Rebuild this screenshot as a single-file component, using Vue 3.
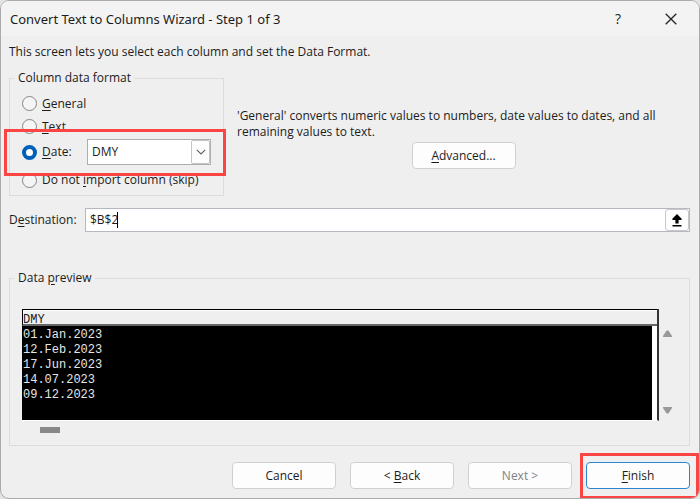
<template>
    <div class="dialog" role="dialog" aria-labelledby="dialog-title">
        <header class="title-bar">
            <h1 id="dialog-title">Convert Text to Columns Wizard - Step 1 of 3</h1>
            <button type="button" class="title-button help" aria-label="Help">?</button>
            <button type="button" class="title-button" aria-label="Close">
                <svg width="12" height="12" viewBox="0 0 12 12" fill="none" stroke="#222" stroke-width="1.3">
                    <path d="M0.7 0.7 11.3 11.3M11.3 0.7 0.7 11.3" />
                </svg>
            </button>
        </header>

        <main class="content">
            <p class="intro">This screen lets you select each column and set the Data Format.</p>

            <div class="format-row">
                <fieldset class="group format-group">
                    <legend>Column data format</legend>
                    <div v-for="option in formats" :key="option.id" :class="['format-option', { tall: option.tall }]">
                        <input :id="option.id" v-model="format" type="radio" name="format" :value="option.id">
                        <label :for="option.id" :class="{ 'date-label': option.id === 'date' }">{{ option.before }}<u>{{ option.key }}</u>{{ option.after }}</label>
                        <div v-if="option.id === 'date'" class="select-box">
                            <select v-model="dateOrder" aria-label="Date order">
                                <option v-for="order in dateOrders" :key="order">{{ order }}</option>
                            </select>
                            <span class="select-arrow">
                                <svg width="10" height="6" viewBox="0 0 10 6" fill="none" stroke="#666" stroke-width="1.2">
                                    <path d="M0.8 0.8 5 5 9.2 0.8" />
                                </svg>
                            </span>
                        </div>
                    </div>
                    <span class="highlight highlight-date"></span>
                </fieldset>

                <div class="format-help">
                    <p>'General' converts numeric values to numbers, date values to dates, and all remaining values to text.</p>
                    <button type="button" class="button"><span><u>A</u>dvanced...</span></button>
                </div>
            </div>

            <div class="destination">
                <label for="destination">D<u>e</u>stination:</label>
                <div class="range-box">
                    <input id="destination" v-model="destination" type="text">
                    <span class="caret"></span>
                    <button type="button" class="range-button" aria-label="Select range">
                        <svg width="10" height="13" viewBox="0 0 10 13" fill="#000">
                            <path d="M5 0 9.6 4.8V6H6.6V9.5H3.4V6H0.4V4.8Z" />
                            <path d="M0.5 11H9.5V12.6H0.5Z" />
                        </svg>
                    </button>
                </div>
            </div>

            <fieldset class="group preview-group">
                <legend>Data <u>p</u>review</legend>
                <div class="preview">
                    <div class="preview-pane">
                        <table>
                            <thead>
                                <tr><th scope="col">{{ dateOrder }}</th></tr>
                            </thead>
                            <tbody>
                                <tr v-for="row in rows" :key="row">
                                    <td>{{ row }}</td>
                                </tr>
                            </tbody>
                        </table>
                    </div>
                    <div class="scroll-arrows">
                        <svg width="9" height="7" viewBox="0 0 9 7" fill="#999"><path d="M3.6 0.4H5.4L9 6V7H0V6Z" /></svg>
                        <svg width="9" height="7" viewBox="0 0 9 7" fill="#999"><path d="M0 0H9V1L5.4 6.6H3.6L0 1Z" /></svg>
                    </div>
                </div>
                <div class="scroll-thumb"></div>
            </fieldset>

            <footer class="actions">
                <button type="button" class="button">Cancel</button>
                <button type="button" class="button"><span>&lt; <u>B</u>ack</span></button>
                <button type="button" class="button" disabled>Next &gt;</button>
                <div class="finish">
                    <button type="button" class="button primary"><span><u>F</u>inish</span></button>
                    <span class="highlight highlight-finish"></span>
                </div>
            </footer>
        </main>
    </div>
</template>

<script setup>
import { ref } from 'vue';

const formats = [
    { id: 'general', before: '', key: 'G', after: 'eneral' },
    { id: 'text', before: '', key: 'T', after: 'ext' },
    { id: 'date', before: '', key: 'D', after: 'ate:', tall: true },
    { id: 'skip', before: 'Do not ', key: 'i', after: 'mport column (skip)', tall: true }
];
const dateOrders = ['DMY', 'MDY', 'YMD', 'MYD', 'DYM', 'YDM'];
const rows = ['01.Jan.2023', '12.Feb.2023', '17.Jun.2023', '14.07.2023', '09.12.2023'];

const format = ref('date');
const dateOrder = ref('DMY');
const destination = ref('$B$2');
</script>

<style>
body {
    background: #e4e4e4;
}
</style>

<style scoped>
* {
    box-sizing: border-box;
}
.dialog {
    min-height: 100vh;
    border: 1px solid #ababab;
    border-radius: 9px;
    background: #efefef;
    color: #1c1c1c;
    font: 12px/16px "Open Sans", "Noto Sans", sans-serif;
    overflow: hidden;
}
.title-bar {
    display: flex;
    align-items: center;
    height: 35px;
    padding: 0 8px 0 9px;
    background: #f3f3f3;
}
h1 {
    flex: 1;
    margin: 0;
    font-family: "Noto Sans", sans-serif;
    font-size: 13px;
    font-weight: 400;
}
.title-button {
    display: flex;
    align-items: center;
    justify-content: center;
    width: 40px;
    height: 32px;
    padding: 0;
    border: 0;
    background: none;
    color: #222;
    font: inherit;
}
.help {
    margin-right: 13px;
    font-size: 14px;
}
.content {
    padding: 8px 9px 8px 8px;
}
p {
    margin: 0;
}
.intro {
    line-height: 16px;
}
u {
    text-underline-offset: 2px;
}
.group {
    min-width: 0;
    margin: 0;
    border: 1px solid #dcdcdc;
}
legend {
    padding: 0 4px;
    line-height: 18px;
}
.format-row {
    display: flex;
    margin-top: 9px;
}
.format-group {
    position: relative;
    width: 215px;
    padding: 5px 4px 1px;
}
.format-option {
    display: flex;
    align-items: center;
    height: 23px;
    padding-left: 8px;
}
.format-option.tall {
    height: 28px;
}
input[type="radio"] {
    appearance: none;
    flex: none;
    width: 15px;
    height: 15px;
    margin: 0 5px 0 0;
    border: 1px solid #858585;
    border-radius: 50%;
    background: #f5f5f5;
}
input[type="radio"]:checked {
    border: 4px solid #005fb8;
    background: #fff;
}
.date-label {
    width: 45px;
}
.select-box {
    position: relative;
    width: 124px;
    height: 26px;
}
select {
    appearance: none;
    width: 100%;
    height: 100%;
    padding: 0 24px 0 4px;
    border: 1px solid #adadb2;
    border-radius: 0;
    background: #fff;
    color: inherit;
    font: inherit;
}
.select-arrow {
    position: absolute;
    top: 1px;
    right: 1px;
    bottom: 1px;
    display: flex;
    align-items: center;
    justify-content: center;
    width: 19px;
    border: 1px solid #c4c4c4;
    border-radius: 2px;
    background: #fdfdfd;
    pointer-events: none;
}
.highlight {
    position: absolute;
    border: 3px solid #fb4444;
    pointer-events: none;
}
.highlight-date {
    top: 42px;
    right: -3px;
    left: -6px;
    height: 47px;
}
.highlight-finish {
    inset: -9px -9px -10px -6px;
}
.format-help {
    flex: 1;
    padding: 39px 0 0 13px;
    text-align: center;
}
.format-help p {
    max-width: 424px;
    margin-bottom: 2px;
    text-align: left;
}
.button {
    width: 104px;
    height: 27px;
    padding: 0;
    border: 1px solid #d0d0d0;
    border-radius: 4px;
    background: #fdfdfd;
    color: inherit;
    font: inherit;
}
.button:disabled {
    color: #838383;
}
.button.primary {
    border-color: #2b84cc;
}
.destination {
    display: flex;
    align-items: center;
    margin-top: 12px;
}
.destination label {
    width: 76px;
}
.range-box {
    position: relative;
    display: flex;
    flex: 1;
    height: 24px;
    border: 1px solid #b5b8be;
    background: #fff;
}
.range-box input {
    flex: 1;
    min-width: 0;
    padding: 0 4px;
    border: 0;
    outline: 0;
    background: none;
    color: inherit;
    font: inherit;
}
.caret {
    position: absolute;
    top: 3px;
    left: 31px;
    width: 1px;
    height: 16px;
    background: #000;
}
.range-button {
    display: flex;
    align-items: center;
    justify-content: center;
    width: 24px;
    padding: 0;
    border: 1px solid #c8c8c8;
    border-radius: 3px;
    background: #fdfdfd;
}
.preview-group {
    margin-top: 37px;
    padding: 22px 17px 12px 12px;
}
.preview-group legend {
    margin-left: -8px;
}
.preview {
    display: flex;
}
.preview-pane {
    flex: 1;
    min-height: 112px;
    border-right: 2px solid #333;
    border-bottom: 1px solid #fff;
    background: linear-gradient(90deg, #000 calc(100% - 5px), #fff 0);
}
table {
    width: 100%;
    border-spacing: 0;
    font: 12px/15px "Liberation Mono", monospace;
    text-align: left;
}
th {
    height: 17px;
    padding: 6px 0 0;
    border: solid #000;
    border-width: 1px 0 2px 1px;
    border-bottom-color: #666;
    background: #efefef;
    box-shadow: inset 1px 1px #fff;
    font-weight: 400;
    line-height: 8px;
}
td {
    padding: 0 0 0 1px;
    color: #e6e6e6;
}
tbody tr:first-child td {
    padding-top: 2px;
}
.scroll-arrows {
    display: flex;
    flex-direction: column;
    justify-content: space-between;
    padding: 21px 0 7px 4px;
}
.scroll-thumb {
    width: 20px;
    height: 6px;
    margin: 6px 0 0 18px;
    background: #888;
}
.actions {
    display: flex;
    justify-content: flex-end;
    gap: 14px;
    margin-top: 16px;
}
.finish {
    position: relative;
    display: flex;
}
</style>
